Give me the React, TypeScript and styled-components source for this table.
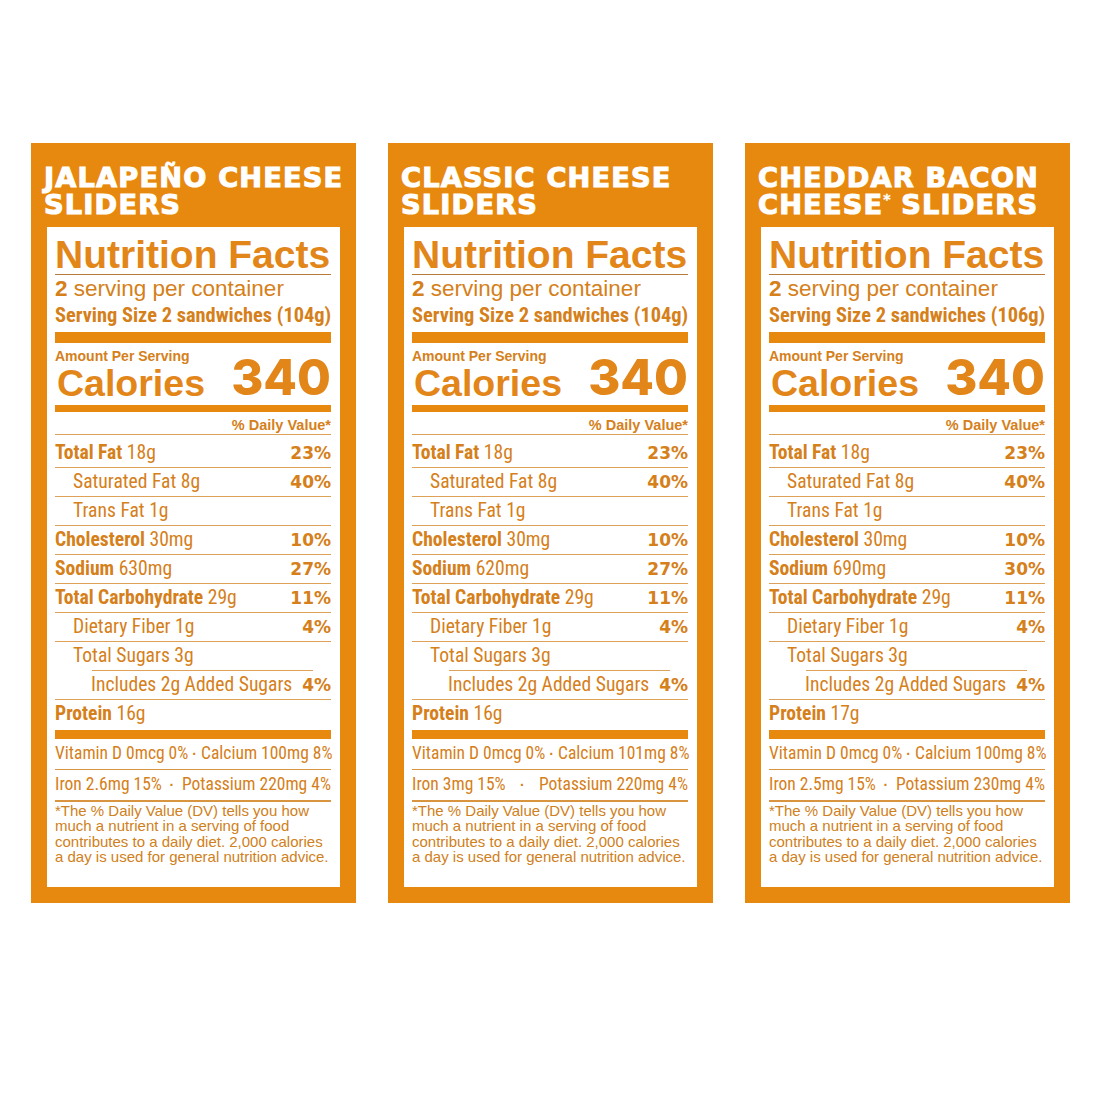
import React from "react";
import styled, { createGlobalStyle } from "styled-components";

const ORANGE = "#E8890F";
const TEXT = "#D5801A";
const RULE = "#DDA257";
const NARROW = `"Roboto Condensed", "Liberation Sans Narrow", "Arial Narrow", "DejaVu Sans Condensed", sans-serif`;

const Global = createGlobalStyle`
  html, body { margin: 0; padding: 0; background: #fff; }
  body { font-family: "Liberation Sans", Arial, sans-serif; }
`;

const Page = styled.main`
  width: 1100px;
  height: 1100px;
  box-sizing: border-box;
  padding: 143px 0 0 31px;
  display: flex;
  gap: 32px;
  align-items: flex-start;
`;

const Panel = styled.section`
  width: 325px;
  height: 760px;
  box-sizing: border-box;
  background: ${ORANGE};
  padding: 0 16px 16px;
  display: flex;
  flex-direction: column;
`;

const Title = styled.h2`
  margin: 0 0 0 -3px;
  height: 84px;
  box-sizing: border-box;
  padding-top: 21px;
  font-family: "DejaVu Sans", Verdana, sans-serif;
  font-weight: 700;
  font-size: 27.2px;
  line-height: 27px;
  letter-spacing: 1.2px;
  color: #fff;
  -webkit-text-stroke: 1.1px #fff;
  white-space: nowrap;
`;

const TitleLine = styled.span`
  display: block;
`;

const Star = styled.sup`
  font-size: 14px;
  line-height: 0;
  vertical-align: 10px;
  letter-spacing: 0;
  -webkit-text-stroke: 0.4px #fff;
`;

const Label = styled.div`
  flex: 1;
  background: #fff;
  padding: 8px 9px 0 8px;
  display: flex;
  flex-direction: column;
  color: ${TEXT};
`;

const Heading = styled.h1`
  margin: 0;
  font-family: "Liberation Sans", Arial, sans-serif;
  font-weight: 700;
  font-size: 39px;
  line-height: 39px;
  color: #E2861A;
  white-space: nowrap;
  border-bottom: 1.5px solid #B97B3C;
`;

const Servings = styled.div`
  margin-top: 1px;
  font-size: 22.5px;
  line-height: 26px;
  white-space: nowrap;
  b { font-weight: 700; }
`;

const ServingSize = styled.div`
  font-family: ${NARROW};
  font-weight: 700;
  font-size: 20.4px;
  line-height: 26px;
  white-space: nowrap;
`;

const Bar = styled.div<{ $h: number; $mt: number }>`
  height: ${(p) => p.$h}px;
  margin-top: ${(p) => p.$mt}px;
  background: ${ORANGE};
  flex: none;
`;

const CalBlock = styled.div`
  margin-top: 5px;
  display: flex;
  justify-content: space-between;
  align-items: flex-end;
`;

const CalLeft = styled.div`
  display: flex;
  flex-direction: column;
`;

const Amount = styled.div`
  font-weight: 700;
  font-size: 14px;
  line-height: 16px;
  white-space: nowrap;
`;

const Calories = styled.div`
  font-weight: 700;
  font-size: 37.5px;
  line-height: 38px;
  color: #E2861A;
  padding-left: 2px;
`;

const CalNum = styled.div`
  font-family: Inter, "DejaVu Sans", sans-serif;
  font-weight: 800;
  font-size: 49px;
  line-height: 48px;
  color: #E2861A;
`;

const DvHead = styled.div`
  margin-top: 3.5px;
  margin-bottom: 4px;
  text-align: right;
  font-weight: 700;
  font-size: 14.5px;
  line-height: 18px;
  border-bottom: 1px solid ${RULE};
`;

const Row = styled.div<{ $indent: number; $rule: boolean }>`
  display: flex;
  justify-content: space-between;
  align-items: baseline;
  padding: 1px 0 1px ${(p) => p.$indent}px;
  font-family: ${NARROW};
  font-size: 19.6px;
  line-height: 26px;
  white-space: nowrap;
  border-bottom: ${(p) => (p.$rule ? `1px solid ${RULE}` : "none")};
  b { font-weight: 700; }
`;

const Pct = styled.span`
  font-family: "DejaVu Sans", sans-serif;
  font-weight: 700;
  font-size: 17px;
  line-height: 20px;
`;

const PartRule = styled.div`
  height: 1px;
  margin: 0 18px 0 37px;
  background: ${RULE};
`;

const VitRow = styled.div<{ $thick: number }>`
  display: flex;
  justify-content: space-between;
  align-items: baseline;
  padding: 3px 0 5px;
  font-family: ${NARROW};
  font-size: 17.5px;
  line-height: 22px;
  white-space: nowrap;
  border-bottom: ${(p) => p.$thick}px solid #D99440;
`;

const Dot = styled.span`
  font-family: "Liberation Sans", sans-serif;
  font-weight: 700;
  font-size: 14px;
  line-height: 14px;
  padding: 0 4px;
`;

const Foot = styled.p`
  margin: 0;
  padding-top: 1px;
  font-size: 15px;
  line-height: 15.5px;
  color: #CF8020;
`;

type Facts = {
  title: React.ReactNode[];
  size: string;
  sodium: string;
  sodiumDv: string;
  protein: string;
  calcium: string;
  iron: string;
  potassium: string;
};

const panels: Facts[] = [
  {
    title: ["JALAPEÑO CHEESE", "SLIDERS"],
    size: "104g",
    sodium: "630mg",
    sodiumDv: "27%",
    protein: "16g",
    calcium: "100mg",
    iron: "2.6mg",
    potassium: "220mg",
  },
  {
    title: ["CLASSIC CHEESE", "SLIDERS"],
    size: "104g",
    sodium: "620mg",
    sodiumDv: "27%",
    protein: "16g",
    calcium: "101mg",
    iron: "3mg",
    potassium: "220mg",
  },
  {
    title: [
      "CHEDDAR BACON",
      <>
        CHEESE<Star>*</Star> SLIDERS
      </>,
    ],
    size: "106g",
    sodium: "690mg",
    sodiumDv: "30%",
    protein: "17g",
    calcium: "100mg",
    iron: "2.5mg",
    potassium: "230mg",
  },
];

function NutritionPanel({ f }: { f: Facts }) {
  return (
    <Panel>
      <Title>
        {f.title.map((t, i) => (
          <TitleLine key={i}>{t}</TitleLine>
        ))}
      </Title>
      <Label>
        <Heading>Nutrition Facts</Heading>
        <Servings>
          <b>2</b> serving per container
        </Servings>
        <ServingSize>Serving Size 2 sandwiches ({f.size})</ServingSize>
        <Bar $h={11} $mt={4} />
        <CalBlock>
          <CalLeft>
            <Amount>Amount Per Serving</Amount>
            <Calories>Calories</Calories>
          </CalLeft>
          <CalNum>340</CalNum>
        </CalBlock>
        <Bar $h={7} $mt={3} />
        <DvHead>% Daily Value*</DvHead>
        <Row $indent={0} $rule>
          <span>
            <b>Total Fat</b> 18g
          </span>
          <Pct>23%</Pct>
        </Row>
        <Row $indent={18} $rule>
          <span>Saturated Fat 8g</span>
          <Pct>40%</Pct>
        </Row>
        <Row $indent={18} $rule>
          <span>Trans Fat 1g</span>
        </Row>
        <Row $indent={0} $rule>
          <span>
            <b>Cholesterol</b> 30mg
          </span>
          <Pct>10%</Pct>
        </Row>
        <Row $indent={0} $rule>
          <span>
            <b>Sodium</b> {f.sodium}
          </span>
          <Pct>{f.sodiumDv}</Pct>
        </Row>
        <Row $indent={0} $rule>
          <span>
            <b>Total Carbohydrate</b> 29g
          </span>
          <Pct>11%</Pct>
        </Row>
        <Row $indent={18} $rule>
          <span>Dietary Fiber 1g</span>
          <Pct>4%</Pct>
        </Row>
        <Row $indent={18} $rule={false}>
          <span>Total Sugars 3g</span>
        </Row>
        <PartRule />
        <Row $indent={36} $rule>
          <span>Includes 2g Added Sugars</span>
          <Pct>4%</Pct>
        </Row>
        <Row $indent={0} $rule={false}>
          <span>
            <b>Protein</b> {f.protein}
          </span>
        </Row>
        <Bar $h={9} $mt={2} />
        <VitRow $thick={1.5}>
          <span>Vitamin D 0mcg 0%</span>
          <Dot>·</Dot>
          <span>Calcium {f.calcium} 8%</span>
        </VitRow>
        <VitRow $thick={2}>
          <span>Iron {f.iron} 15%</span>
          <Dot>·</Dot>
          <span>Potassium {f.potassium} 4%</span>
        </VitRow>
        <Foot>
          *The % Daily Value (DV) tells you how much a nutrient in a serving of
          food contributes to a daily diet. 2,000 calories a day is used for
          general nutrition advice.
        </Foot>
      </Label>
    </Panel>
  );
}

export default function App() {
  return (
    <>
      <Global />
      <Page>
        {panels.map((f, i) => (
          <NutritionPanel key={i} f={f} />
        ))}
      </Page>
    </>
  );
}
